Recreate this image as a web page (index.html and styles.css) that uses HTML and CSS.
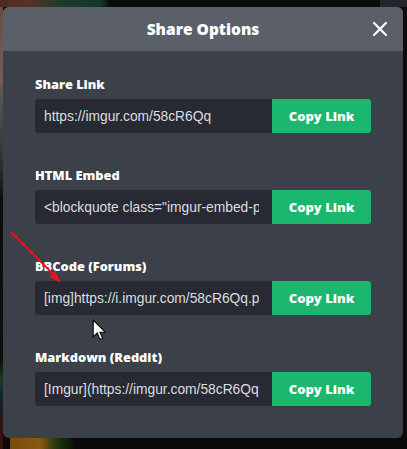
FILE: index.html
```html
<!DOCTYPE html>
<html>
<head>
<meta charset="utf-8">
<link rel="stylesheet" href="styles.css">
</head>
<body>
<div class="backdrop">
  <div class="modal">
    <div class="modal-header">
      <h1 class="title">Share Options</h1>
      <button class="close" aria-label="Close">
        <svg width="14" height="14" viewBox="0 0 14 14"><path d="M1 1 L13 13 M13 1 L1 13" stroke="#fff" stroke-width="2.2" stroke-linecap="square"/></svg>
      </button>
    </div>
    <div class="modal-body">
      <div class="field">
        <div class="label">Share Link</div>
        <div class="row">
          <input class="value" readonly value="https://imgur.com/58cR6Qq">
          <button class="copy">Copy Link</button>
        </div>
      </div>
      <div class="field">
        <div class="label">HTML Embed</div>
        <div class="row">
          <input class="value" readonly value='&lt;blockquote class="imgur-embed-pub" lang="en" data-id="58cR6Qq"&gt;&lt;a href="https://imgur.com/58cR6Qq"&gt;&lt;/a&gt;&lt;/blockquote&gt;'>
          <button class="copy">Copy Link</button>
        </div>
      </div>
      <div class="field">
        <div class="label">BBCode (Forums)</div>
        <div class="row">
          <input class="value" readonly value="[img]https://i.imgur.com/58cR6Qq.png[/img]">
          <button class="copy">Copy Link</button>
        </div>
      </div>
      <div class="field">
        <div class="label">Markdown (Reddit)</div>
        <div class="row">
          <input class="value" readonly value="[Imgur](https://imgur.com/58cR6Qq)">
          <button class="copy">Copy Link</button>
        </div>
      </div>
    </div>
  </div>
  <svg class="annot-arrow" width="70" height="70" viewBox="0 0 70 70">
    <line x1="11" y1="2" x2="55" y2="46" stroke="#e3161b" stroke-width="2"/>
    <polygon points="61,53 49,47 55,41" fill="#e3161b"/>
  </svg>
  <svg class="cursor" width="15" height="23" viewBox="0 0 14 22">
    <path d="M1 1 L1 17 L4.8 13.4 L7.5 19.6 L10 18.5 L7.4 12.6 L12.5 12.6 Z" fill="#fff" stroke="#000" stroke-width="1" stroke-linejoin="miter"/>
  </svg>
</div>
</body>
</html>
```
FILE: styles.css
```css
html, body {
  margin: 0;
  padding: 0;
}
body {
  width: 407px;
  height: 449px;
  overflow: hidden;
  background: #0c0c0d;
  font-family: "Open Sans", "Liberation Sans", sans-serif;
}
.backdrop {
  position: relative;
  width: 407px;
  height: 449px;
  padding: 7px 4px 0 3px;
  box-sizing: border-box;
  background:
    linear-gradient(90deg, rgba(0,0,0,0) 0, rgba(0,0,0,0) 380px, #23252a 380px) 0 0 / 407px 7px no-repeat,
    linear-gradient(90deg, #4a2c22 0, #5a3226 30px, #1f3a2a 60px, #103a28 100px, #0b0b0b 110px) 0 0 / 407px 7px no-repeat,
    linear-gradient(180deg, #6b4a44 0, #7a5a55 80px, #5a5a5a 90px, #2b2b2b 170px, #0d0d0d 200px, #101010 360px, #1b3a20 380px, #102030 400px, #3a1010 430px) 0 0 / 3px 449px no-repeat,
    linear-gradient(90deg, #0a0a0a 0, #0a0a0a 10px, #7a4a10 10px, #8a5a12 40px, #2a3a10 55px, #0a1a08 70px, #0a0a0a 75px) 0 438px / 407px 11px no-repeat,
    #0c0c0d;
}
.modal {
  width: 400px;
  height: 431px;
  background: #3b4049;
  border-radius: 6px;
  overflow: hidden;
  display: flex;
  flex-direction: column;
}
.modal-header {
  height: 44px;
  flex: none;
  background: #5a5f68;
  display: flex;
  align-items: center;
  justify-content: center;
  position: relative;
}
.title {
  margin: 0;
  color: #fff;
  font-size: 15.5px;
  font-weight: 800;
  line-height: 20px;
}
.close {
  position: absolute;
  right: 16px;
  top: 15px;
  width: 14px;
  height: 14px;
  padding: 0;
  border: 0;
  background: none;
  display: flex;
}
.modal-body {
  padding: 25px 32px 0 32px;
  display: flex;
  flex-direction: column;
  gap: 34px;
}
.field {
  display: flex;
  flex-direction: column;
  gap: 7px;
}
.label {
  color: #fff;
  font-size: 12.8px;
  font-weight: 800;
  line-height: 16px;
}
.row {
  display: flex;
  height: 34px;
}
.value {
  width: 237px;
  box-sizing: border-box;
  height: 34px;
  border: 0;
  margin: 0;
  outline: none;
  background: #272a32;
  color: #dcdde0;
  font-family: "Liberation Sans", Arial, sans-serif;
  font-size: 13.8px;
  padding: 0 13px 0 9px;
  border-radius: 3px 0 0 3px;
}
.copy {
  width: 99px;
  height: 34px;
  border: 0;
  margin: 0;
  padding: 0;
  background: #1bb76e;
  color: #fff;
  font-family: "Open Sans", "Liberation Sans", sans-serif;
  font-size: 13px;
  font-weight: 800;
  border-radius: 0 3px 3px 0;
}
.annot-arrow {
  position: absolute;
  left: 0;
  top: 230px;
}
.cursor {
  position: absolute;
  left: 92px;
  top: 319px;
}
```
